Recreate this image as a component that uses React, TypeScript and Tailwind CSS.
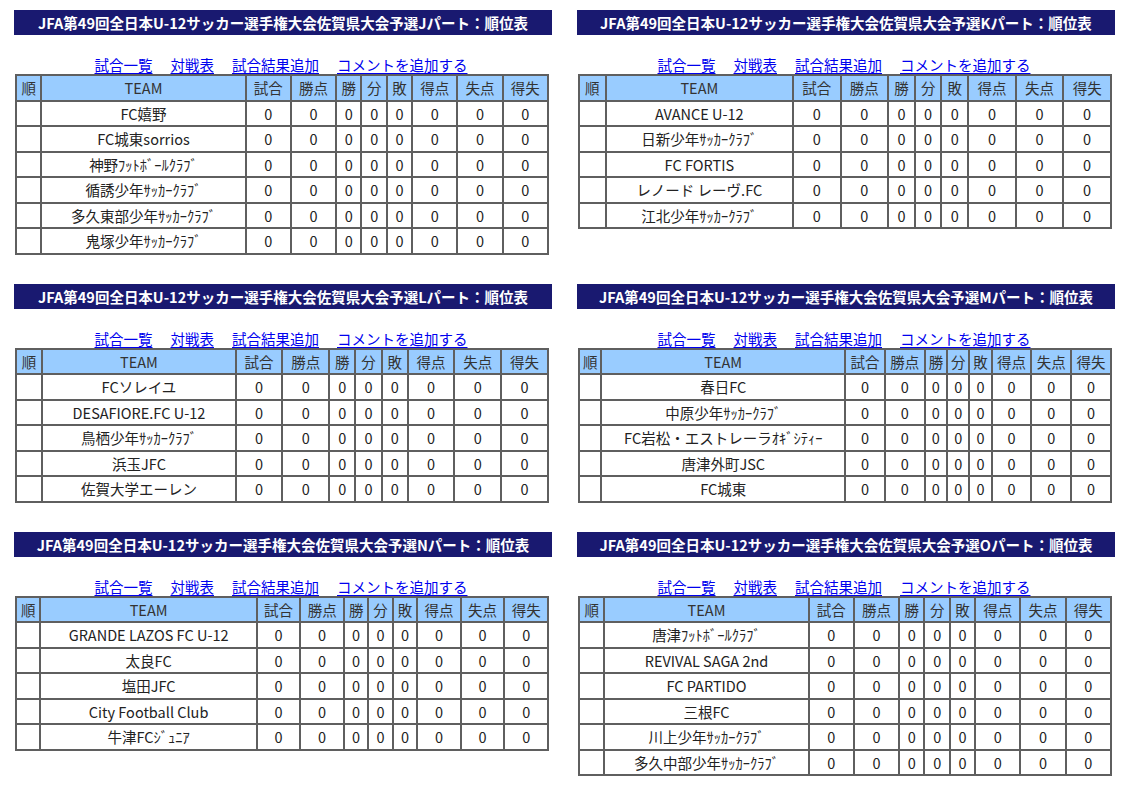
import React from 'react';

type Part = {
  code: string;
  teams: string[];
};

const parts: Part[] = [
  { code: 'J', teams: ['FC嬉野', 'FC城東sorrios', '神野ﾌｯﾄﾎﾞｰﾙｸﾗﾌﾞ', '循誘少年ｻｯｶｰｸﾗﾌﾞ', '多久東部少年ｻｯｶｰｸﾗﾌﾞ', '鬼塚少年ｻｯｶｰｸﾗﾌﾞ'] },
  { code: 'K', teams: ['AVANCE U-12', '日新少年ｻｯｶｰｸﾗﾌﾞ', 'FC FORTIS', 'レノード レーヴ.FC', '江北少年ｻｯｶｰｸﾗﾌﾞ'] },
  { code: 'L', teams: ['FCソレイユ', 'DESAFIORE.FC U-12', '鳥栖少年ｻｯｶｰｸﾗﾌﾞ', '浜玉JFC', '佐賀大学エーレン'] },
  { code: 'M', teams: ['春日FC', '中原少年ｻｯｶｰｸﾗﾌﾞ', 'FC岩松・エストレーラｵｷﾞｼﾃｨｰ', '唐津外町JSC', 'FC城東'] },
  { code: 'N', teams: ['GRANDE LAZOS FC U-12', '太良FC', '塩田JFC', 'City Football Club', '牛津FCｼﾞｭﾆｱ'] },
  { code: 'O', teams: ['唐津ﾌｯﾄﾎﾞｰﾙｸﾗﾌﾞ', 'REVIVAL SAGA 2nd', 'FC PARTIDO', '三根FC', '川上少年ｻｯｶｰｸﾗﾌﾞ', '多久中部少年ｻｯｶｰｸﾗﾌﾞ'] },
];

const headers = ['順', 'TEAM', '試合', '勝点', '勝', '分', '敗', '得点', '失点', '得失'];
const links = ['試合一覧', '対戦表', '試合結果追加', 'コメントを追加する'];

const cell = 'border-2 border-[#5f5f5f] px-[1px] py-[1px] leading-[21.5px] text-center whitespace-nowrap';

const Standings: React.FC<{ part: Part }> = ({ part }) => (
  <section>
    {/* タイトル */}
    <h2 className="h-[25px] bg-[#191970] text-white font-bold text-center leading-[25px]">
      JFA第49回全日本U-12サッカー選手権大会佐賀県大会予選{part.code}パート：順位表
    </h2>

    <div className="w-[534px] mt-[21px] flex justify-center gap-[18px] leading-[18px]">
      {links.map((l) => (
        <a key={l} href="#" className="text-[#0000ee] underline underline-offset-2">
          {l}
        </a>
      ))}
    </div>

    <table className="w-[534px] ml-[1px] border-collapse text-[#222]">
      <thead>
        <tr className="bg-[#99ccff]">
          {headers.map((h) => (
            <th key={h} className={`${cell} font-normal text-[#333]`}>
              {h}
            </th>
          ))}
        </tr>
      </thead>
      <tbody>
        {part.teams.map((t) => (
          <tr key={t}>
            <td className={cell}></td>
            <td className={cell}>{t}</td>
            {Array.from({ length: 8 }).map((_, i) => (
              <td key={i} className={cell}>
                0
              </td>
            ))}
          </tr>
        ))}
      </tbody>
    </table>
  </section>
);

export default function App() {
  return (
    <div
      className="min-h-screen bg-white pt-[10px] pl-[14px] text-[14.5px]"
      style={{ fontFamily: '"Noto Sans CJK JP", "Noto Sans", sans-serif' }}
    >
      <div className="grid grid-cols-[538px_538px] gap-x-[25px] gap-y-[29px] items-start">
        {parts.map((p) => (
          <Standings key={p.code} part={p} />
        ))}
      </div>
    </div>
  );
}
